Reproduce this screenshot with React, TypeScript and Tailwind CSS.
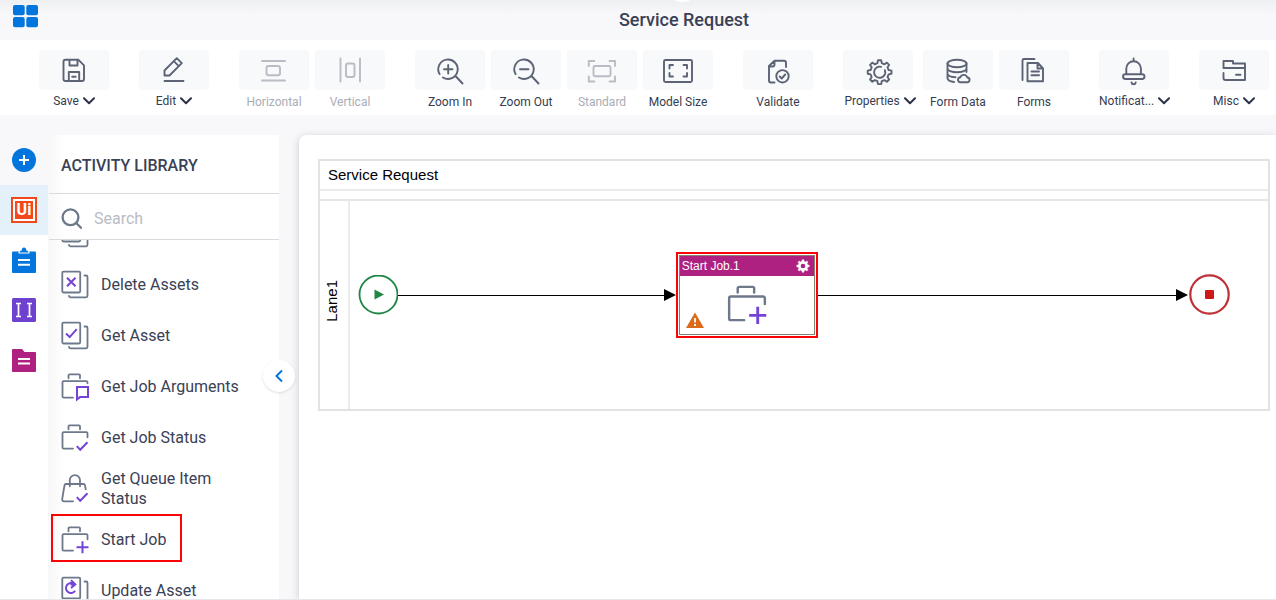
import type { ReactNode } from 'react'

interface Tool {
  label: string
  icon: ReactNode
  menu?: boolean
  disabled?: boolean
}

interface Activity {
  label: string
  icon: ReactNode
  selected?: boolean
}

const lens = 'M5.6 20.1A9.7 9.7 0 1 1 8.9 23.5M21.5 22l7 7.5'

// outline of a cog with the given number of teeth
const cogPath = (cx: number, cy: number, inner: number, outer: number, teeth: number) => {
  const step = (Math.PI * 2) / teeth
  const points: string[] = []
  for (let i = 0; i < teeth; i++) {
    const a = i * step - Math.PI / 2
    const corners = [
      [inner, -0.3],
      [outer, -0.17],
      [outer, 0.17],
      [inner, 0.3],
    ]
    corners.forEach(([r, t]) => {
      points.push(`${(cx + r * Math.cos(a + t * step)).toFixed(2)} ${(cy + r * Math.sin(a + t * step)).toFixed(2)}`)
    })
  }
  return `M${points.join('L')}Z`
}

function ToolIcon({ children }: { children: ReactNode }) {
  return (
    <svg
      viewBox="0 0 32 32"
      className="w-8 h-8"
      fill="none"
      stroke="currentColor"
      strokeWidth="1.9"
      strokeLinecap="round"
      strokeLinejoin="round"
      aria-hidden="true"
    >
      {children}
    </svg>
  )
}

function Chevron() {
  return (
    <svg viewBox="0 0 12 8" className="w-3 h-2" fill="none" stroke="#2b3348" strokeWidth="2" strokeLinecap="round" strokeLinejoin="round" aria-hidden="true">
      <path d="M1 1.2l5 5 5-5" />
    </svg>
  )
}

const toolGroups: Tool[][] = [
  [
    {
      label: 'Save',
      menu: true,
      icon: <path d="M7.500 5.800h13l5.500 5.500V25a2 2 0 0 1-2 2H7.500a2 2 0 0 1-2-2V7.800a2 2 0 0 1 2-2zM11.500 6v5.500h8V6M10.800 27v-9h10.400v9M14.200 22.700h3.500" />,
    },
  ],
  [
    {
      label: 'Edit',
      menu: true,
      icon: <path d="M6.500 21.500v-5L18.800 4.200l5 5L11.500 21.500zM15.800 7.200l5 5M6.500 27h19" />,
    },
  ],
  [
    {
      label: 'Horizontal',
      disabled: true,
      icon: (
        <>
          <path d="M4 7h23M4 26.500h23" />
          <rect x="8.500" y="12" width="13.500" height="9.300" rx="2" />
        </>
      ),
    },
    {
      label: 'Vertical',
      disabled: true,
      icon: (
        <>
          <path d="M6.500 4.500v23M26 4.500v23" />
          <rect x="12" y="9.500" width="8.500" height="13.500" rx="2" />
        </>
      ),
    },
  ],
  [
    { label: 'Zoom In', icon: <path d={`${lens}M10 15.3h8.5M14.2 11v8.5`} /> },
    { label: 'Zoom Out', icon: <path d={`${lens}M10 15.3h8.5`} /> },
    {
      label: 'Standard',
      disabled: true,
      icon: (
        <>
          <path d="M2.800 12V7h5.500M23.500 7H29v5M29 22.500v5h-5.500M8.300 27.500H2.800v-5" />
          <rect x="7.500" y="12" width="17" height="10.300" rx="1.500" />
        </>
      ),
    },
    {
      label: 'Model Size',
      icon: (
        <>
          <rect x="2" y="6" width="28" height="22" rx="1.500" />
          <path d="M7.500 14.500V11h3.500M21.500 11H25v3.500M25 19v3.500h-3.500M11 22.500H7.500V19" />
        </>
      ),
    },
  ],
  [
    {
      label: 'Validate',
      icon: (
        <>
          <path d="M12.500 28.500H9a2 2 0 0 1-2-2V12l5.500-5.300h9.500a2 2 0 0 1 2 2v4.300M7.500 12.500H10.500a2 2 0 0 0 2-2V7" />
          <circle cx="20.500" cy="22.300" r="6.200" />
          <path d="M17.700 22.500l2 2 3.500-4" />
        </>
      ),
    },
  ],
  [
    {
      label: 'Properties',
      menu: true,
      icon: (
        <>
          <path d={cogPath(17.600, 18.200, 9.300, 12, 8)} />
          <path d="M22.900 16.200a5.600 5.600 0 1 1-3.800-3.400" />
        </>
      ),
    },
    {
      label: 'Form Data',
      icon: (
        <>
          <ellipse cx="15" cy="9.500" rx="9.500" ry="3.800" />
          <path d="M5.500 9.500V24c0 1.900 2.500 3.500 6.500 4M24.500 9.500V18M5.500 14.500c0 2 4 3.800 9.500 3.800s9.500-1.800 9.500-3.800M5.500 19.500c0 1.900 3 3.500 8 3.800" />
          <path d="M18 28.300h7a2.400 2.400 0 0 0 .3-4.800 3.700 3.700 0 0 0-7-.3 2.600 2.600 0 0 0-.3 5.100z" />
        </>
      ),
    },
    {
      label: 'Forms',
      icon: <path d="M4.500 26V6.500a1.500 1.500 0 0 1 1.500-1.500h10.500M9.500 9h10.500l5 5.500V27.200H9.500zM19.500 9v5.500H25M13.500 17.500h7.500M13.500 21.300h7.500" />,
    },
  ],
  [
    {
      label: 'Notificat...',
      menu: true,
      icon: (
        <>
          <path d="M8.300 20v-5.500a7.300 7.300 0 0 1 14.600 0V20M15.600 4.500v2.500M13.500 28.500c.4 2.300 3.800 2.300 4.200 0" />
          <rect x="5" y="20.200" width="21.500" height="4.800" rx="2.400" />
        </>
      ),
    },
  ],
  [
    {
      label: 'Misc',
      menu: true,
      icon: <path d="M5.500 14V7h9.500v2.500H27V26H7.500a2 2 0 0 1-2-2v-5M5.500 14H27M18 20.800h4.500" />,
    },
  ],
]

function ToolButton({ tool }: { tool: Tool }) {
  return (
    <button
      type="button"
      disabled={tool.disabled}
      className={`shrink-0 flex flex-col items-start ${tool.label === 'Properties' ? 'w-[74px]' : 'w-[70px]'} ${
        tool.disabled ? 'text-[#b9bcc4]' : 'text-[#5b6375] cursor-pointer'
      }`}
    >
      <span className="w-[70px] h-10 rounded bg-[#f8f9fb] flex items-center justify-center">
        <ToolIcon>{tool.icon}</ToolIcon>
      </span>
      <span
        className={`w-max min-w-full flex items-center justify-center gap-1 text-xs whitespace-nowrap ${
          tool.menu ? 'leading-[22px]' : 'leading-6'
        } ${tool.disabled ? 'text-[#a9adb6]' : 'text-[#363d50]'}`}
      >
        {tool.label}
        {tool.menu && <Chevron />}
      </span>
    </button>
  )
}

function ActivityIcon({ base, accent, large }: { base: string; accent?: string; large?: boolean }) {
  return (
    <svg
      viewBox="0.5 0.7 28 28"
      className={`shrink-0 overflow-visible ${large ? 'w-10 h-10' : 'w-7 h-7'}`}
      fill="none"
      strokeWidth={large ? 1.7 : 1.8}
      strokeLinecap="round"
      strokeLinejoin="round"
      aria-hidden="true"
    >
      <path d={base} stroke="#6d788b" />
      {accent && <path d={accent} stroke="#7444d6" strokeLinecap="butt" strokeLinejoin="miter" strokeWidth="2" />}
    </svg>
  )
}

const pages = 'M3 1.3h15.5a1.2 1.2 0 0 1 1.2 1.2v18.5a1.2 1.2 0 0 1-1.2 1.2H3a1.2 1.2 0 0 1-1.2-1.2V2.5A1.2 1.2 0 0 1 3 1.3zM24 5.2h1.5a1.5 1.5 0 0 1 1.5 1.5V25.5a1.5 1.5 0 0 1-1.5 1.5H10a1.5 1.5 0 0 1-1.5-1.5'
const briefcase = 'M8 6V3a1 1 0 0 1 1-1h9.5a1 1 0 0 1 1 1v3M12.5 25.3H3.2A1.2 1.2 0 0 1 2 24.1V10a1.2 1.2 0 0 1 1.2-1.2h22.6A1.2 1.2 0 0 1 27 10v4'
const briefcaseShort = 'M8 6V3a1 1 0 0 1 1-1h9.5a1 1 0 0 1 1 1v3M12.5 25.3H3.2A1.2 1.2 0 0 1 2 24.1V10a1.2 1.2 0 0 1 1.2-1.2h22.6A1.2 1.2 0 0 1 27 10v1'
const bag = 'M9.3 12V6a5.1 5.1 0 0 1 10.2 0v6M12.5 27H3.5A1.9 1.9 0 0 1 1.7 24.7L4 11a1.6 1.6 0 0 1 1.5-1.3h17.5A1.6 1.6 0 0 1 24.5 11l.7 4'
const tick = 'M16.3 22.8l3.4 3.7 7.3-7.5'
const plus = 'M22 16v12M16 22h12'

const activities: Activity[] = [
  { label: 'Delete Assets', icon: <ActivityIcon base={pages} accent="M6.5 7.5l8.5 8.5M15 7.5L6.5 16" /> },
  { label: 'Get Asset', icon: <ActivityIcon base={pages} accent="M5.5 12.3l3.7 3.5 7-8" /> },
  { label: 'Get Job Arguments', icon: <ActivityIcon base={briefcaseShort} accent="M16.5 14.8H27.5V24.8H19.5L16.5 27.2z" /> },
  { label: 'Get Job Status', icon: <ActivityIcon base={briefcase} accent={tick} /> },
  { label: 'Get Queue Item Status', icon: <ActivityIcon base={bag} accent={tick} /> },
  { label: 'Start Job', icon: <ActivityIcon base={briefcase} accent={plus} />, selected: true },
  { label: 'Update Asset', icon: <ActivityIcon base={pages} accent="M14.6 14.5a5 5 0 1 1-.8-6.5M10.5 3.8l4.3 4.4-4.3 3.500M14.500 8.200H10" /> },
]

function Rail() {
  const cell = 'w-full h-[50px] flex items-center justify-center cursor-pointer'
  return (
    <nav aria-label="Libraries" className="w-12 shrink-0 flex flex-col">
      <div className="pt-5">
        <button type="button" aria-label="Add" className={cell}>
          <svg viewBox="0 0 24 24" className="w-6 h-6">
            <circle cx="12" cy="12" r="12" fill="#0276dc" />
            <path d="M12 7v10M7 12h10" stroke="#fff" strokeWidth="2" />
          </svg>
        </button>
      </div>
      <button type="button" className={`${cell} bg-[#e4f0fa]`}>
        <span className="w-[26px] h-[26px] bg-[#f1491c] p-[2px]">
          <span className="w-full h-full border-2 border-white flex items-center justify-center text-white text-base leading-none font-bold">Ui</span>
        </span>
      </button>
      <div className="flex-1 bg-white">
        <button type="button" aria-label="Tasks" className={cell}>
          <svg viewBox="0 0 24 26" className="w-6 h-[26px]">
            <rect y="4.5" width="24" height="21.500" rx="1" fill="#0276dc" />
            <path d="M6.500 6.500V5c0-1.500 1-2.300 2.500-2.300C9.500 1 10.500.2 12 .2s2.500.8 3 2.500c1.500 0 2.500.8 2.500 2.300v1.500z" fill="#fff" />
            <path d="M7.500 5.500c0-1.200.7-1.800 2-1.800C10 1.500 10.500.5 12 .5s2 1 2.500 3.200c1.300 0 2 .6 2 1.800z" fill="#0276dc" />
            <path d="M6 13h12M6 17.800h12" stroke="#fff" strokeWidth="2" />
          </svg>
        </button>
        <button type="button" aria-label="Variables" className={cell}>
          <svg viewBox="0 0 24 24" className="w-6 h-6">
            <rect width="24" height="24" rx="1.5" fill="#6f41cf" />
            <path d="M4 5.500h5M4 18.500h5M6.500 5.500v13M15 5.500h5M15 18.500h5M17.500 5.500v13" stroke="#fff" strokeWidth="1.7" />
          </svg>
        </button>
        <button type="button" aria-label="Documents" className={cell}>
          <svg viewBox="0 0 24 24" className="w-6 h-6">
            <path d="M1 1h9l2.500 3H23a1 1 0 0 1 1 1v18a1 1 0 0 1-1 1H1a1 1 0 0 1-1-1V2a1 1 0 0 1 1-1z" fill="#ae2181" />
            <path d="M6 11h12M6 15.500h12" stroke="#fff" strokeWidth="1.9" />
          </svg>
        </button>
      </div>
    </nav>
  )
}

function ActivityLibrary() {
  const row = 'relative w-full h-[51px] pl-3 pr-10 flex items-center gap-3 text-left cursor-pointer'
  return (
    <aside className="relative z-10 w-[230px] shrink-0 mt-5 ml-px flex flex-col bg-linear-to-r from-[#f8f8f9] to-white to-7%">
      <h2 className="h-[59px] shrink-0 px-3 pt-1 flex items-center border-b border-[#d9dadd] text-base font-medium text-[#3a4155]">
        ACTIVITY LIBRARY
      </h2>
      <label className="h-[46px] shrink-0 px-3 pt-1 flex items-center gap-3 border-b border-[#d9dadd]">
        <svg viewBox="0 0 21 21" className="w-[21px] h-[21px] shrink-0" fill="none" stroke="#6d788b" strokeWidth="2.3" strokeLinecap="round" aria-hidden="true">
          <circle cx="9.5" cy="9.300" r="7.900" />
          <path d="M15.2 15l4.800 4.800" />
        </svg>
        <input
          type="search"
          aria-label="Search"
          placeholder="Search"
          className="w-full min-w-0 bg-transparent text-base text-[#3a4155] placeholder:text-[#b9bcc4] outline-none"
        />
      </label>
      <div className="flex-1 min-h-0 overflow-hidden">
        <ul className="-mt-8">
          <li>
            <button type="button" aria-label="Create Asset" className={row}>
              <ActivityIcon base={pages} />
            </button>
          </li>
          {activities.map((activity) => (
            <li key={activity.label}>
              <button type="button" className={row}>
                {activity.icon}
                <span className={`text-base leading-5 text-[#3a4155] ${activity.label.length > 18 ? '' : 'whitespace-nowrap'}`}>
                  {activity.label}
                </span>
                {activity.selected && <span className="absolute left-[2px] top-0 w-[131px] h-12 border-2 border-[#fa0505]"></span>}
              </button>
            </li>
          ))}
        </ul>
      </div>
      <button
        type="button"
        aria-label="Collapse library"
        className="absolute -right-4 top-[225px] w-8 h-8 rounded-full bg-white shadow flex items-center justify-center cursor-pointer"
      >
        <svg viewBox="0 0 12 14" className="w-3 h-[14px]" fill="none" stroke="#0276dc" strokeWidth="2">
          <path d="M9 1.500L3.500 7 9 12.500" />
        </svg>
      </button>
    </aside>
  )
}

function Connector({ className }: { className: string }) {
  return (
    <div className={`flex items-center ${className}`}>
      <div className="flex-1 h-px bg-black"></div>
      <svg viewBox="0 0 12 12" className="w-3 h-3" aria-hidden="true">
        <path d="M0 0l12 6-12 6z" />
      </svg>
    </div>
  )
}

function StartJobNode() {
  return (
    <div className="relative w-[142px] h-[86px] shrink-0 border-2 border-[#fa0505] p-px">
      <div className="h-full border border-[#85826f] flex flex-col">
        <div className="h-5 pl-[2px] pr-1 flex items-center justify-between bg-[#ae2181] text-white text-xs">
          Start Job.1
          <svg viewBox="0 0 14 14" className="w-[14px] h-[14px]" aria-hidden="true">
            <path d={cogPath(7, 7, 4.8, 6.3, 8)} fill="#fff" stroke="#fff" strokeWidth="0.5" />
            <circle cx="7" cy="7" r="2.3" fill="#ae2181" />
          </svg>
        </div>
        <div className="flex-1 flex items-center justify-center">
          <ActivityIcon base={briefcase} accent={plus} large />
        </div>
      </div>
      <svg viewBox="0 0 18 16" className="absolute left-2 bottom-2 w-[18px] h-4" aria-hidden="true">
        <path d="M9 .5L18 16H0z" fill="#dc6a18" />
        <path d="M9 6v4.500M9 12v2" stroke="#fff" strokeWidth="1.8" />
      </svg>
    </div>
  )
}

function Canvas() {
  return (
    <main className="flex-1 min-w-0 mt-5 ml-5 pt-6 pl-[19px] pr-[6px] rounded-tl-lg bg-white shadow-[0_2px_8px_rgba(60,64,80,0.25)]">
      <section className="border-2 border-[#e2e2e2] text-black font-['Liberation_Sans',Arial,sans-serif]">
        <h2 className="h-[30px] px-2 flex items-center border-b-2 border-[#ebebeb] text-[15px]">Service Request</h2>
        <div className="h-[10px] border-b-2 border-[#e6e6e6]"></div>
        <div className="h-[208px] flex">
          <div className="w-[30px] shrink-0 pb-2 pr-1 flex items-center justify-center border-r-2 border-[#ebebeb] text-[15px]">
            <span className="[writing-mode:vertical-rl] rotate-180">Lane1</span>
          </div>
          <div className="flex-1 pt-[51px] pl-2 pr-[38px]">
            <div className="flex items-center">
              <svg viewBox="0 0 40 40" className="w-10 h-10 shrink-0" role="img" aria-label="Start">
                <circle cx="20.5" cy="19.5" r="19" fill="none" stroke="#1f8645" strokeWidth="1.8" />
                <path d="M16.500 14.500l9.500 5-9.500 5z" fill="#1f8645" />
              </svg>
              <Connector className="flex-3" />
              <StartJobNode />
              <Connector className="flex-4" />
              <svg viewBox="0 0 42 42" className="w-[42px] h-[42px] shrink-0" role="img" aria-label="End">
                <circle cx="21.5" cy="20.5" r="19.2" fill="none" stroke="#bf3037" strokeWidth="2.2" />
                <rect x="17" y="16" width="9" height="9" rx="1" fill="#cc1a1a" />
              </svg>
            </div>
          </div>
        </div>
      </section>
    </main>
  )
}

export default function App() {
  return (
    <div className="h-screen flex flex-col overflow-hidden bg-[#f8f8fb] border-b border-[#e6e7ea] font-[Roboto,sans-serif]">
      <header className="h-10 shrink-0 flex bg-linear-to-b from-[#eeeff1] to-[#f8f8fb] to-35%">
        <a href="#" aria-label="Home" className="w-[92px] shrink-0 pl-[13px] pt-1">
          <svg viewBox="0 0 25 24" className="w-[25px] h-6" fill="#0276dc">
            <rect x="0" y="1" width="11.7" height="10.3" rx="2" />
            <rect x="13.3" y="1" width="11.7" height="10.3" rx="2" />
            <rect x="0" y="13" width="11.7" height="10.3" rx="2" />
            <rect x="13.3" y="13" width="11.7" height="10.3" rx="2" />
          </svg>
        </a>
        <div className="relative flex-1 flex items-center justify-center">
          <span className="absolute bottom-full left-1/2 -mb-[2px] -ml-5 w-9 h-9 rounded-full bg-white"></span>
          <h1 className="text-lg font-medium text-[#3a4155]">Service Request</h1>
        </div>
      </header>
      <div role="toolbar" className="h-[75px] shrink-0 pt-[10px] pl-[39px] flex gap-[30px] bg-white">
        {toolGroups.map((group) => (
          <div key={group[0].label} className="flex items-start gap-[6px]">
            {group.map((tool) => (
              <ToolButton key={tool.label} tool={tool} />
            ))}
          </div>
        ))}
      </div>
      <div className="flex-1 min-h-0 flex">
        <Rail />
        <ActivityLibrary />
        <Canvas />
      </div>
    </div>
  )
}
